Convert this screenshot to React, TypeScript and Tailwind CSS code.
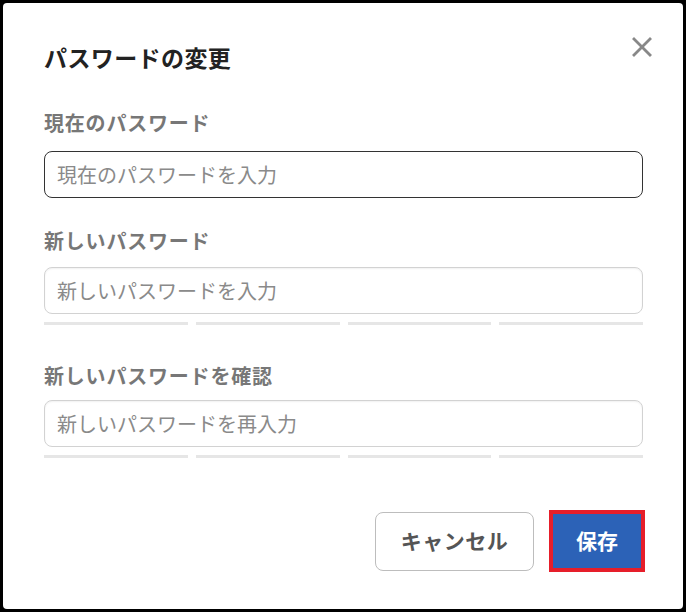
import React from 'react';

function StrengthBars() {
  return (
    <div className="mt-[8px] grid grid-cols-4 gap-[8px]">
      <div className="h-[3px] bg-[#e6e6e6]" />
      <div className="h-[3px] bg-[#e6e6e6]" />
      <div className="h-[3px] bg-[#e6e6e6]" />
      <div className="h-[3px] bg-[#e6e6e6]" />
    </div>
  );
}

export default function App() {
  return (
    <div className="w-[686px] h-[612px] bg-black pt-[3px] pl-[3px] font-['Noto_Sans_CJK_JP','Noto_Sans',sans-serif]">
      <div className="relative w-[680px] h-[606px] bg-white rounded-[4px] pt-[39px] pl-[41px] pr-[40px]">
        {/* close */}
        <button className="absolute top-[34px] right-[31px] w-[20px] h-[20px] text-[#888]" aria-label="閉じる">
          <svg viewBox="0 0 20 20" width="20" height="20" fill="none" stroke="currentColor" strokeWidth="2.8" strokeLinecap="square">
            <line x1="2" y1="2" x2="18" y2="18" />
            <line x1="18" y1="2" x2="2" y2="18" />
          </svg>
        </button>

        <h2 className="text-[23px] leading-[30px] tracking-[0.4px] font-bold text-[#222]">パスワードの変更</h2>

        {/* 現在のパスワード */}
        <label className="block mt-[37px] text-[20px] leading-[28px] tracking-[0.8px] font-bold text-[#777]">現在のパスワード</label>
        <input
          type="password"
          placeholder="現在のパスワードを入力"
          className="mt-[14px] block w-full h-[47px] px-[12px] rounded-[8px] border border-[#333] bg-white text-[20px] outline-none placeholder:text-[#8a8a8a]"
        />

        {/* 新しいパスワード */}
        <label className="block mt-[29px] text-[20px] leading-[28px] tracking-[0.8px] font-bold text-[#777]">新しいパスワード</label>
        <input
          type="password"
          placeholder="新しいパスワードを入力"
          className="mt-[12px] block w-full h-[47px] px-[12px] rounded-[8px] border border-[#d2d2d2] bg-white shadow-[inset_0_1px_2px_rgba(0,0,0,0.06)] text-[20px] outline-none placeholder:text-[#8a8a8a]"
        />
        <StrengthBars />

        {/* 確認 */}
        <label className="block mt-[37px] text-[20px] leading-[28px] tracking-[0.8px] font-bold text-[#777]">新しいパスワードを確認</label>
        <input
          type="password"
          placeholder="新しいパスワードを再入力"
          className="mt-[10px] block w-full h-[47px] px-[12px] rounded-[8px] border border-[#d2d2d2] bg-white shadow-[inset_0_1px_2px_rgba(0,0,0,0.06)] text-[20px] outline-none placeholder:text-[#8a8a8a]"
        />
        <StrengthBars />

        {/* actions */}
        <div className="mt-[52px] -mr-[2px] flex justify-end items-center gap-[15px]">
          <button className="w-[159px] h-[59px] rounded-[8px] border border-[#bdbdbd] bg-white text-[21px] tracking-[0.5px] font-bold text-[#555]">
            キャンセル
          </button>
          <button className="w-[96px] h-[62px] border-4 border-[#e61e2a] bg-[#2c62b7] text-[21px] font-bold text-white">
            保存
          </button>
        </div>
      </div>
    </div>
  );
}
